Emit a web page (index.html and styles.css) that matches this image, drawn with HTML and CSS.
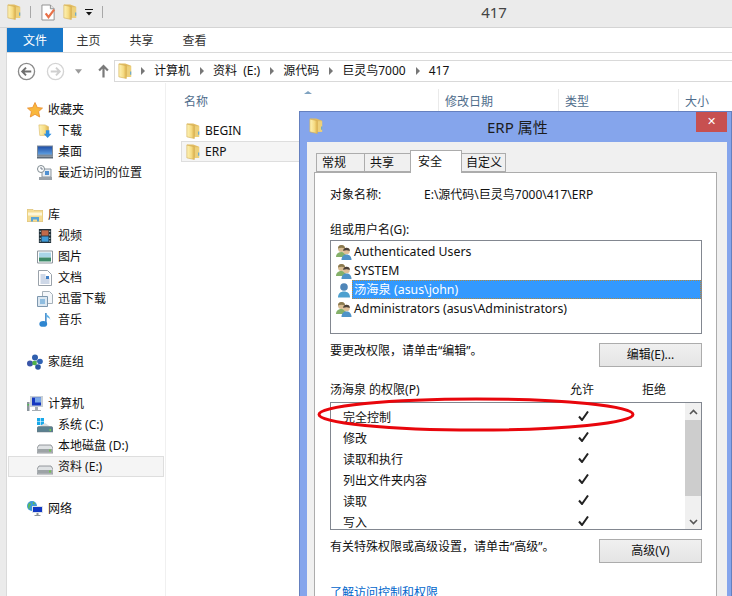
FILE: index.html
```html
<!DOCTYPE html>
<html lang="zh-CN">
<head>
<meta charset="utf-8">
<title>417</title>
<link rel="stylesheet" href="styles.css">
</head>
<body>
<svg class="defs" width="0" height="0" aria-hidden="true">
  <defs>
    <linearGradient id="fg" x1="0" x2="1" y1="0" y2="0"><stop offset="0" stop-color="#fdf3b8"/><stop offset=".6" stop-color="#f6dc84"/><stop offset="1" stop-color="#dcb14e"/></linearGradient>
    <linearGradient id="scr" x1="0" x2="0" y1="0" y2="1"><stop offset="0" stop-color="#1f4fa8"/><stop offset="1" stop-color="#5f9fe0"/></linearGradient>
    <symbol id="folder" viewBox="1.500 1 12.500 15">
      <path d="M2 1.500h6l5.500 2v10.500H3z" fill="#e2bd63"/>
      <path d="M2 2l7 1.500v12L2 14z" fill="url(#fg)" stroke="#d5ae55" stroke-width=".6"/>
      <path d="M9.500 4h4v10H9.500z" fill="#edd07a"/>
      <path d="M12.600 9h1v3h-1z" fill="#5aa5d8"/>
    </symbol>
    <symbol id="user2" viewBox="0 0 16 16">
      <circle cx="5.500" cy="4.500" r="3.500" fill="#d8bc92"/><path d="M2 4.500a3.500 3.500 0 0 1 7 0c-2-1-5-1-7 0z" fill="#8a7a50"/>
      <path d="M0 13c0-3.500 2.500-5 5.500-5S10 9.500 10 13z" fill="#84b069"/>
      <circle cx="10.500" cy="7" r="3.300" fill="#e0bf98"/><path d="M7.200 7a3.300 3.300 0 0 1 6.600 0c-2-1-4.600-1-6.600 0z" fill="#4a4038"/>
      <path d="M5.500 16c0-3.500 2-5.500 5-5.500s5 2 5 5.500z" fill="#4f93c8"/>
    </symbol>
    <symbol id="check" viewBox="0 0 11 10">
      <path d="M1 5.500L4 9 10 .5" fill="none" stroke="#222" stroke-width="2"/>
    </symbol>
    <symbol id="hdd" viewBox="0 0 16 16">
      <path d="M2 7h12l2 3v5H0v-5z" fill="#dfe2e4" stroke="#7f8488" stroke-width=".8"/>
      <path d="M.5 11h15v3.500H.5z" fill="#9da3a6"/>
      <path d="M12 11.500h2v2h-2z" fill="#72c850"/>
    </symbol>
  </defs>
</svg>

<div class="window">
  <header class="titlebar">
    <div class="qat">
      <svg class="ico"><use href="#folder"/></svg>
      <span class="qat-sep"></span>
      <svg class="ico doc" viewBox="0 0 16 18"><path d="M1 1h9l4 4v12H1z" fill="#fff" stroke="#8d8d8d"/><path d="M10 1v4h4" fill="#e6e6e6" stroke="#8d8d8d"/><path d="M5 10l3 4 6-8" fill="none" stroke="#e8724a" stroke-width="2.400"/></svg>
      <svg class="ico"><use href="#folder"/></svg>
      <svg class="qat-drop" viewBox="0 0 8 7"><path d="M0 0h8v1H0zM1 3h6L4 6.500z" fill="#111"/></svg>
      <span class="qat-sep"></span>
    </div>
    <div class="wtitle">417</div>
  </header>

  <nav class="ribbon">
    <a class="rtab file">文件</a>
    <a class="rtab">主页</a>
    <a class="rtab">共享</a>
    <a class="rtab">查看</a>
  </nav>

  <div class="addrrow">
    <svg class="navbtn" viewBox="0 0 20 20"><circle cx="10" cy="10" r="8.500" fill="#fff" stroke="#8a8a8a" stroke-width="1.400"/><path d="M15 10H6M9.500 6L5.500 10l4 4" fill="none" stroke="#6f6f6f" stroke-width="2"/></svg>
    <svg class="navbtn next" viewBox="0 0 20 20"><circle cx="10" cy="10" r="8.500" fill="#fff" stroke="#d4d4d4" stroke-width="1.400"/><path d="M5 10h9M10.500 6l4 4-4 4" fill="none" stroke="#cfcfcf" stroke-width="2"/></svg>
    <svg class="navdrop" viewBox="0 0 8 5"><path d="M0 0h8L4 5z" fill="#9a9a9a"/></svg>
    <svg class="navup" viewBox="0 0 10 12"><path d="M5 12V2M1 5.500L5 1.500l4 4" fill="none" stroke="#7a7a7a" stroke-width="2"/></svg>
    <div class="addr">
      <svg class="ico addr-folder"><use href="#folder"/></svg>
      <span class="crumb-arrow"></span><span class="crumb">计算机</span>
      <span class="crumb-arrow"></span><span class="crumb">资料 (E:)</span>
      <span class="crumb-arrow"></span><span class="crumb">源代码</span>
      <span class="crumb-arrow"></span><span class="crumb">巨灵鸟7000</span>
      <span class="crumb-arrow"></span><span class="crumb">417</span>
    </div>
  </div>

  <div class="body">
    <aside class="side">
      <div class="srow top"><svg class="ico" viewBox="0 0 16 16"><path d="M8 .5l2.300 5 5.200.6-3.900 3.500 1.100 5.400L8 12.300 3.300 15l1.100-5.400L.5 6.100l5.200-.6z" fill="#f9b73c" stroke="#e98a2a" stroke-width=".8"/></svg>收藏夹</div>
      <div class="srow sub"><svg class="ico" viewBox="0 0 16 16"><path d="M1 1h7l4 2v10H2z" fill="url(#fg)" stroke="#d5ae55" stroke-width=".6"/><path d="M9 7h4v4h2.500L11 16l-4.500-5H9z" fill="#2f8fdf"/></svg>下载</div>
      <div class="srow sub"><svg class="ico wide" viewBox="0 0 16 13"><path d="M0 0h16v11H0z" fill="#7d8b9a"/><path d="M1 1h14v8H1z" fill="url(#scr)"/><path d="M0 11h16v2H0z" fill="#5c6a78"/></svg>桌面</div>
      <div class="srow sub"><svg class="ico wide" viewBox="0 0 16 16"><path d="M5 4h9v8H5z" fill="#e8edf2" stroke="#8c959d"/><path d="M8 6h4v4H8z" fill="#4f8fd0"/><path d="M2 12h13v3H2z" fill="#9aa1a8"/><circle cx="4" cy="4" r="3.500" fill="#fff" stroke="#7e8a90"/><path d="M4 2v2h2" fill="none" stroke="#567" stroke-width=".8"/></svg>最近访问的位置</div>
      <div class="gap"></div>
      <div class="srow top"><svg class="ico" viewBox="0 0 16 15"><path d="M0 2h6l1 1h9v11H0z" fill="#f4dc94" stroke="#d5b560" stroke-width=".6"/><path d="M1 5h14v3H1z" fill="#fdf6d8"/><path d="M4 14V9.500h8V14h-2v-2H6v2z" fill="#5aa4d6"/></svg>库</div>
      <div class="srow sub"><svg class="ico" viewBox="0 0 16 16"><path d="M1 0h14v16H1z" fill="#22303a"/><path d="M4 1.500h8v6H4z" fill="#c16a4a"/><path d="M4 8.500h8v6H4z" fill="#3f9bd8"/><path d="M2 2h1v1.500H2zM2 6h1v1.500H2zM2 10h1v1.500H2zM2 13h1v1.500H2zM13 2h1v1.500h-1zM13 6h1v1.500h-1zM13 10h1v1.500h-1zM13 13h1v1.500h-1z" fill="#dff"/></svg>视频</div>
      <div class="srow sub"><svg class="ico wide" viewBox="0 0 16 13"><path d="M.5.500h15v12H.5z" fill="#fff" stroke="#8d959c"/><path d="M2 2h12v5H2z" fill="#a9d5e8"/><path d="M2 7h12v4H2z" fill="#3d8a68"/></svg>图片</div>
      <div class="srow sub"><svg class="ico" viewBox="0 0 14 16"><path d="M.5.500h9l4 4v11H.500z" fill="#fff" stroke="#9aa2aa"/><path d="M2.500 5h5M2.500 7h5M2.500 9h9M2.500 11h9M2.500 13h9" stroke="#9db1d0"/><path d="M8 6h3v3H8z" fill="#3f7fc6"/></svg>文档</div>
      <div class="srow sub"><svg class="ico wide" viewBox="0 0 16 16"><path d="M5.500.500h7l3 3v9h-10z" fill="#f4f7fa" stroke="#a6b1ba"/><path d="M.5 5.500h10v10H.500z" fill="#dbe7f1" stroke="#7d97ae"/><path d="M3 8h5v5H3z" fill="#8fbde0"/></svg>迅雷下载</div>
      <div class="srow sub"><svg class="ico" viewBox="0 0 16 16"><path d="M9 0v12" stroke="#2f7cc4" stroke-width="1.600"/><ellipse cx="6" cy="12.500" rx="4.500" ry="3.300" fill="#2f86d0"/><path d="M9 0c1 3 5 3 5 8 0-2-3-3-5-4z" fill="#5fb0e6"/></svg>音乐</div>
      <div class="gap"></div>
      <div class="srow top"><svg class="ico" viewBox="0 0 16 16"><path d="M8 8L3 9M8 8l5-2M8 8l2 5" stroke="#7aa" stroke-width="1.500"/><circle cx="8" cy="3.500" r="3" fill="#2f5fae"/><circle cx="3" cy="9.500" r="3" fill="#3a56a8"/><circle cx="13" cy="7.500" r="2.800" fill="#2f62b4"/><circle cx="11" cy="13" r="2.800" fill="#2a55a0"/><circle cx="7.500" cy="9" r="2.300" fill="#4fb04a"/></svg>家庭组</div>
      <div class="gap"></div>
      <div class="srow top"><svg class="ico" viewBox="0 0 16 16"><path d="M3 0h13v11H3z" fill="#c8d0d6"/><path d="M5 1.500h9v8H5z" fill="#1538c0"/><path d="M8 1.500h6v5H8z" fill="#7aa8e8"/><path d="M8 11h3v3h3v1H5v-1h3z" fill="#a6adb3"/><path d="M0 6h2.500v9H0z" fill="#8b959c"/><path d="M.5 8h1.500v1.500H.5z" fill="#4cc04c"/></svg>计算机</div>
      <div class="srow sub"><svg class="ico wide" viewBox="0 0 16 16"><path d="M0 1h3.200v3.200H0zM3.800 1H7v3.200H3.800zM0 4.800h3.200V8H0zM3.800 4.800H7V8H3.800z" fill="#16a8ea"/><path d="M8 6l6 4H1z" fill="#d8dde0"/><path d="M0 11c0-1 1-1.500 2-1.500h12c1 0 2 .5 2 1.500v4H0z" fill="#5a8090" stroke="#6c7a80" stroke-width=".5"/><path d="M12.500 12h1.500v2h-1.500z" fill="#6fd04a"/></svg>系统 (C:)</div>
      <div class="srow sub"><svg class="ico wide"><use href="#hdd"/></svg>本地磁盘 (D:)</div>
      <div class="srow sub current"><svg class="ico wide"><use href="#hdd"/></svg>资料 (E:)</div>
      <div class="gap"></div>
      <div class="srow top"><svg class="ico" viewBox="0 0 16 16"><circle cx="5" cy="5" r="5" fill="#3f9ad8"/><path d="M1.500 2.500c2-1 3 1 2 2s-2 2 0 4L1 7zM6 .5l2 2-2 1z" fill="#5fbf4a"/><path d="M5 5h11v7H5z" fill="#dce3e8"/><path d="M6 6h9v5H6z" fill="#1238c4"/><path d="M9.500 12h2v2h2v1h-6v-1h2z" fill="#8d959b"/></svg>网络</div>
    </aside>

    <main class="files">
      <div class="fhead">
        <div class="col c-name">名称<span class="sort"></span></div>
        <div class="col c-date">修改日期</div>
        <div class="col c-type">类型</div>
        <div class="col c-size">大小</div>
      </div>
      <div class="frow"><svg class="ico"><use href="#folder"/></svg>BEGIN</div>
      <div class="frow selected"><svg class="ico"><use href="#folder"/></svg>ERP</div>
    </main>
  </div>
</div>

<section class="dialog">
  <div class="dtitle">
    <svg class="ico dicon"><use href="#folder"/></svg>
    <span class="dname">ERP 属性</span>
    <button class="close" type="button">✕</button>
  </div>
  <div class="dclient">
    <div class="tabs">
      <span class="tab t1">常规</span>
      <span class="tab t2">共享</span>
      <span class="tab active">安全</span>
      <span class="tab t4">自定义</span>
    </div>
    <div class="page">
      <div class="objline"><span class="objlabel">对象名称:</span><span>E:\源代码\巨灵鸟7000\417\ERP</span></div>
      <div class="label grp">组或用户名(G):</div>
      <div class="users">
        <div class="urow"><svg class="uico"><use href="#user2"/></svg><span class="uname">Authenticated Users</span></div>
        <div class="urow"><svg class="uico"><use href="#user2"/></svg><span class="uname">SYSTEM</span></div>
        <div class="urow"><svg class="uico" viewBox="0 0 16 16"><circle cx="8" cy="5" r="3.800" fill="#4f86b8"/><path d="M2 15.500c0-4 2.500-6 6-6s6 2 6 6z" fill="#4da0cf"/></svg><span class="uname sel">汤海泉 (asus\john)</span></div>
        <div class="urow"><svg class="uico"><use href="#user2"/></svg><span class="uname">Administrators (asus\Administrators)</span></div>
      </div>
      <div class="actline edit"><span>要更改权限，请单击“编辑”。</span><button class="btn" type="button">编辑(E)...</button></div>
      <div class="permhead"><span class="ph-name">汤海泉 的权限(P)</span><span class="ph-a">允许</span><span class="ph-d">拒绝</span></div>
      <div class="perms">
        <div class="plist">
          <div class="prow"><span class="pname">完全控制</span><svg class="chk"><use href="#check"/></svg></div>
          <div class="prow"><span class="pname">修改</span><svg class="chk"><use href="#check"/></svg></div>
          <div class="prow"><span class="pname">读取和执行</span><svg class="chk"><use href="#check"/></svg></div>
          <div class="prow"><span class="pname">列出文件夹内容</span><svg class="chk"><use href="#check"/></svg></div>
          <div class="prow"><span class="pname">读取</span><svg class="chk"><use href="#check"/></svg></div>
          <div class="prow"><span class="pname">写入</span><svg class="chk"><use href="#check"/></svg></div>
        </div>
        <div class="sbar">
          <svg class="sarrow" viewBox="0 0 9 6"><path d="M1 5l3.500-3.500L8 5" fill="none" stroke="#555" stroke-width="1.600"/></svg>
          <div class="thumb"></div>
          <svg class="sarrow" viewBox="0 0 9 6"><path d="M1 1l3.500 3.500L8 1" fill="none" stroke="#555" stroke-width="1.600"/></svg>
        </div>
      </div>
      <div class="actline adv"><span>有关特殊权限或高级设置，请单击“高级”。</span><button class="btn" type="button">高级(V)</button></div>
      <a class="help">了解访问控制和权限</a>
    </div>
  </div>
</section>

<svg class="ring" viewBox="0 0 320 36" aria-hidden="true"><ellipse cx="159" cy="17.500" rx="157" ry="15.500" fill="none" stroke="#e8060c" stroke-width="3"/></svg>
</body>
</html>
```

FILE: styles.css
```css
* { box-sizing: border-box; }
html, body { margin: 0; height: 100%; }
body {
  position: relative;
  width: 732px;
  height: 596px;
  overflow: hidden;
  background: #fff;
  color: #111;
  font: 12px/16px "Noto Sans", "Noto Sans CJK SC", sans-serif;
}
.defs { position: absolute; }
.ico { width: 14px; height: 16px; flex: none; display: block; }
.ico.wide { width: 16px; }

.window { height: 596px; display: flex; flex-direction: column; background: #ebebeb; }

.titlebar {
  height: 28px; flex: none; display: flex; align-items: center; position: relative;
  background: #ebebeb; border-bottom: 1px solid #d4d4d4; padding-left: 7px;
}
.qat { display: flex; align-items: center; }
.qat .ico { margin-top: -4px; }
.qat-sep { width: 1px; height: 12px; background: #a8a8a8; margin: -4px 10px 0 9px; }
.qat .doc { width: 15px; height: 17px; margin-right: 7px; margin-top: -2px; }
.qat-drop { width: 8px; height: 7px; margin: -2px 0 0 8px; }
.qat-drop + .qat-sep { margin-left: 9px; }
.wtitle {
  position: absolute; left: 0; right: 0; top: 2px; text-align: center;
  font-size: 15px; line-height: 20px; color: #444; padding-left: 256px;
}

.ribbon {
  height: 25px; flex: none; display: flex; margin-left: 6px; background: #fff;
  border-bottom: 1px solid #dadada; border-left: 1px solid #dadada;
}
.rtab { width: 53px; text-align: center; line-height: 25px; color: #333; }
.rtab.file { width: 56px; background: #1979ca; color: #fff; height: 24px; }
.ribbon .rtab:nth-child(2) { margin-left: -1px; }

.addrrow {
  height: 30px; flex: none; display: flex; align-items: center;
  margin-left: 6px; padding: 6px 0 0 10px; border-left: 1px solid #dadada;
  background: #fff;
}
.navbtn { width: 19px; height: 19px; flex: none; }
.navbtn.next { margin-left: 10px; }
.navdrop { width: 7px; height: 5px; margin-left: 10px; flex: none; }
.navup { width: 11px; height: 14px; margin-left: 16px; flex: none; }
.addr {
  flex: 1; height: 22px; margin-left: 5px; display: flex; align-items: center;
  border: 1px solid #d9d9d9; border-right: 0; padding-left: 3px; color: #111;
}
.addr-folder { margin-right: -1px; }
.crumb-arrow {
  width: 0; height: 0; margin: 0 9px 0 10px; flex: none;
  border-left: 4px solid #777; border-top: 4px solid transparent; border-bottom: 4px solid transparent;
}
.crumb { white-space: nowrap; word-spacing: 3px; }

.body { flex: 1; display: flex; margin-left: 6px; border-left: 1px solid #dadada; background: #fff; min-height: 0; }

.side { width: 159px; flex: none; border-right: 1px solid #f0f0f0; padding-top: 16px; }
.srow { height: 21px; display: flex; align-items: center; white-space: nowrap; }
.srow.top { padding-left: 20px; }
.srow.top .ico { width: 16px; margin-right: 5px; }
.srow.sub { padding-left: 30px; gap: 5px; }
.srow.sub .ico { margin: 0 1px; }
.srow.sub .ico.wide { margin: 0; }
.gap { height: 21px; }
.srow.current { background: #f5f5f5; box-shadow: inset 0 0 0 1px #dedede; width: 156px; margin-left: 1px; padding-left: 29px; }

.files { flex: 1; min-width: 0; padding-top: 6px; }
.fhead { height: 22px; display: flex; color: #4f6d8c; }
.col { position: relative; padding-top: 5px; line-height: 16px; border-left: 1px solid #eaeaea; }
.c-name { width: 272px; padding-left: 18px; border-left: 0; }
.c-date { width: 120px; padding-left: 6px; }
.c-type { width: 120px; padding-left: 6px; }
.c-size { width: 54px; padding-left: 6px; }
.sort {
  position: absolute; left: 138px; top: 2px; width: 0; height: 0;
  border-left: 4px solid transparent; border-right: 4px solid transparent; border-bottom: 3px solid #7fa2c0;
}
.frow { height: 21px; display: flex; align-items: center; gap: 5px; margin-left: 15px; padding-left: 5px; }
.fhead + .frow { margin-top: 9px; }
.selected { background: #f5f5f5; box-shadow: inset 0 0 0 1px #dedede; width: 130px; }

.dialog {
  position: absolute; left: 299px; top: 111px; width: 433px; height: 500px;
  background: #85a5ec; border: 1px solid #6580bf; display: flex; flex-direction: column;
  padding: 0 4px 0 7px;
}
.dtitle { height: 30px; flex: none; display: flex; position: relative; align-items: flex-start; }
.dicon { margin: 6px 0 0 2px; }
.dname { position: absolute; left: 180px; top: 5px; font-size: 15px; line-height: 20px; color: #1d1d1d; }
.close {
  position: absolute; right: 0; top: 0; width: 31px; height: 20px; border: 0; padding: 0;
  background: #c75050; color: #fff; font: 11px/20px "DejaVu Sans", sans-serif;
}
.dclient { flex: 1; background: #f0f0f0; padding: 8px 10px 0 7px; min-height: 0; }
.tabs { display: flex; align-items: flex-end; height: 22px; padding-left: 2px; position: relative; z-index: 1; }
.tab {
  height: 19px; line-height: 18px; padding: 0 0 0 5px; background: #f0f0f0; white-space: nowrap;
  border: 1px solid #acacac; margin-left: -1px;
}
.tab.t1 { width: 49px; margin-left: 0; }
.tab.t2 { width: 47px; }
.tab.active { width: 52px; height: 23px; background: #fff; border-bottom: 0; line-height: 20px; padding-top: 1px; padding-left: 7px; position: relative; margin-bottom: -1px; }
.tab.t4 { width: 45px; padding-left: 4px; }
.page {
  height: 440px; background: #fff; border: 1px solid #acacac; padding: 14px 14px 0 15px;
}
.objline { height: 16px; display: flex; }
.objlabel { width: 94px; flex: none; }
.label.grp { margin-top: 19px; }
.users {
  margin-top: 2px; height: 94px; border: 1px solid #828790; padding: 1px 0 0 5px;
}
.urow { height: 19px; display: flex; align-items: center; }
.uico { width: 16px; height: 16px; flex: none; margin-right: 2px; }
.uname { font-size: 12.300px; line-height: 18px; white-space: nowrap; }
.uname.sel {
  flex: 1; background: #3399ff; color: #fff; outline: 1px dotted #b5893d; outline-offset: -1px;
  height: 19px; margin-left: -2px; padding-left: 2px; line-height: 20px;
}
.actline { display: flex; justify-content: space-between; }
.actline.edit { margin-top: 9px; height: 24px; }
.actline span { line-height: 16px; }
.btn {
  width: 103px; height: 24px; padding: 0; border: 1px solid #acacac;
  background: linear-gradient(#f0f0f0, #e5e5e5); color: #111; font: inherit;
}
.permhead { margin-top: 15px; height: 16px; display: flex; }
.ph-name { width: 240px; }
.ph-a { width: 72px; }
.perms { margin-top: 4px; height: 128px; border: 1px solid #828790; display: flex; }
.plist { flex: 1; padding: 4px 0 0 12px; overflow: hidden; }
.prow { height: 21px; display: flex; align-items: center; }
.pname { width: 235px; flex: none; }
.chk { width: 11px; height: 10px; flex: none; margin-top: -4px; }
.sbar { width: 16px; flex: none; background: #f0f0f0; display: flex; flex-direction: column; align-items: center; }
.sarrow { width: 9px; height: 6px; margin: 6px 0 5px; flex: none; }
.sarrow:last-child { margin: 6px 0 0; }
.thumb { width: 100%; height: 76px; background: #cdcdcd; margin: 0 0 17px; flex: none; }
.actline.adv { margin-top: 9px; height: 24px; }
.help { display: block; margin-top: 22px; color: #0066cc; }

.ring { position: absolute; left: 317px; top: 397px; width: 320px; height: 36px; }
```
